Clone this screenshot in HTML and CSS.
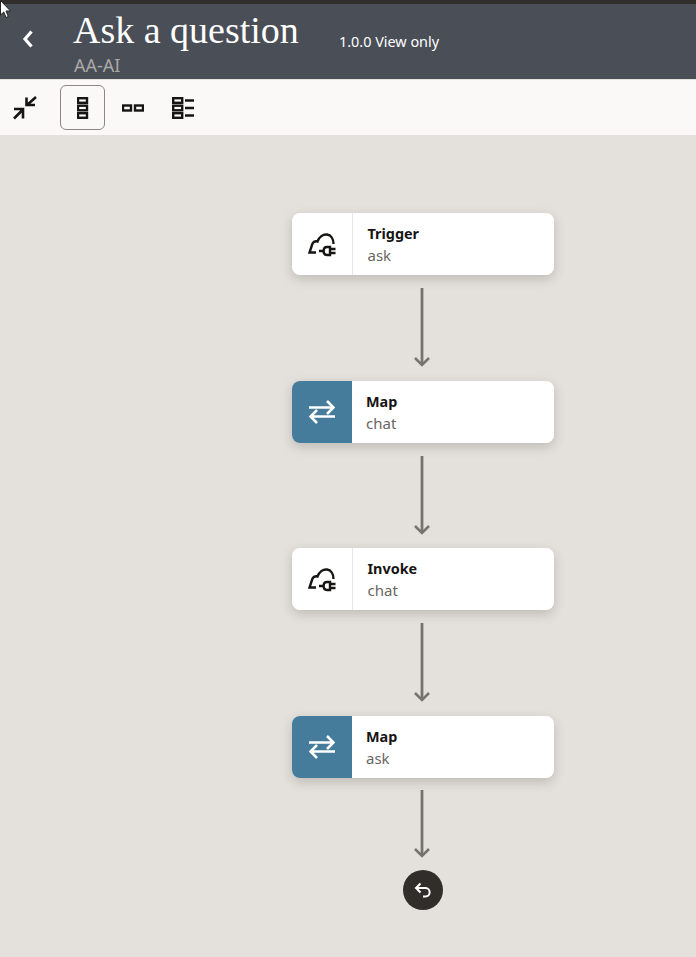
FILE: index.html
```html
<!DOCTYPE html>
<html>
<head>
    <title>Ask a question</title>
    <link rel="stylesheet" href="styles.css">
</head>
<body>
    <svg class="cursor" width="12" height="20" viewBox="0 0 12 20">
        <path d="M0.5 0.5 L0.5 15 L3.8 12 L6 17.5 L8.3 16.5 L6 11 L10.5 11 Z" fill="#fff" stroke="#222" stroke-width="1"/>
    </svg>

    <div class="topline"></div>

    <div class="header">
        <a class="back">
            <svg width="12" height="20" viewBox="0 0 12 20"><path d="M9.5 2.5 L3 10 L9.5 17.5" fill="none" stroke="#fff" stroke-width="3.2"/></svg>
        </a>
        <div class="titles">
            <h1>Ask a question</h1>
            <div class="subtitle">AA-AI</div>
        </div>
        <div class="version">1.0.0 View only</div>
    </div>

    <div class="toolbar">
        <button class="tool">
            <svg width="24" height="24" viewBox="0 0 24 24" fill="none" stroke="#161513" stroke-width="2.6">
                <path d="M23 1 L13.5 9.5 M13.5 1.5 V9 H22"/>
                <path d="M1 22.5 L10 13.5 M1 13 H10 V22.5"/>
            </svg>
        </button>
        <button class="tool active">
            <svg width="12" height="22" viewBox="0 0 12 22" fill="none" stroke="#161513" stroke-width="2.4">
                <rect x="1" y="1.2" width="9" height="4.6"/>
                <rect x="1" y="8.7" width="9" height="4.6"/>
                <rect x="1" y="16.2" width="9" height="4.6"/>
            </svg>
        </button>
        <button class="tool">
            <svg width="22" height="8" viewBox="0 0 22 8" fill="none" stroke="#161513" stroke-width="2.4">
                <rect x="1" y="1.5" width="8" height="5"/>
                <rect x="13" y="1.5" width="8" height="5"/>
            </svg>
        </button>
        <button class="tool">
            <svg width="22" height="22" viewBox="0 0 22 22" fill="none" stroke="#161513" stroke-width="2.4">
                <rect x="1.2" y="1.2" width="9" height="4.6"/>
                <rect x="1.2" y="8.7" width="9" height="4.6"/>
                <rect x="1.2" y="16.2" width="9" height="4.6"/>
                <path d="M13 3.5 H22 M13 11 H22 M13 18.5 H22"/>
            </svg>
        </button>
    </div>

    <div class="canvas">
        <div class="card">
            <div class="card-icon">
                <svg width="28" height="26" viewBox="0 0 28 26" fill="none" stroke="#161513" stroke-width="2.4">
                    <path d="M8 21.5 H1.5 L4.5 12.5 C5.5 10.5 7.5 10 9.5 10.5 C11 6 15 3 19 3.5 C23 4 25.5 8 25.5 13"/>
                    <path d="M11 20 H15 M22 16 H19 C14.5 16 14.5 24 19 24 H22 Z M22 18 H27.5 M22 22 H27.5"/>
                </svg>
            </div>
            <div class="card-text">
                <div class="card-title">Trigger</div>
                <div class="card-sub">ask</div>
            </div>
        </div>
        <div class="arrow">
            <svg width="16" height="79" viewBox="0 0 16 79" fill="none" stroke="#76726d" stroke-width="2.8">
                <path d="M8 0 V77"/>
                <path d="M1 70 L8 77 L15 70" stroke-width="2.5"/>
            </svg>
        </div>

        <div class="card">
            <div class="card-icon map">
                <svg width="26" height="24" viewBox="0 0 26 24" fill="none" stroke="#fff" stroke-width="2.6">
                    <path d="M0 7.5 H24.5 M18 1 L24.5 7.5 L18 14"/>
                    <path d="M26 16.5 H1.5 M8 10 L1.5 16.5 L8 23"/>
                </svg>
            </div>
            <div class="card-text">
                <div class="card-title">Map</div>
                <div class="card-sub">chat</div>
            </div>
        </div>
        <div class="arrow">
            <svg width="16" height="79" viewBox="0 0 16 79" fill="none" stroke="#76726d" stroke-width="2.8">
                <path d="M8 0 V77"/>
                <path d="M1 70 L8 77 L15 70" stroke-width="2.5"/>
            </svg>
        </div>

        <div class="card">
            <div class="card-icon">
                <svg width="28" height="26" viewBox="0 0 28 26" fill="none" stroke="#161513" stroke-width="2.4">
                    <path d="M8 21.5 H1.5 L4.5 12.5 C5.5 10.5 7.5 10 9.5 10.5 C11 6 15 3 19 3.5 C23 4 25.5 8 25.5 13"/>
                    <path d="M11 20 H15 M22 16 H19 C14.5 16 14.5 24 19 24 H22 Z M22 18 H27.5 M22 22 H27.5"/>
                </svg>
            </div>
            <div class="card-text">
                <div class="card-title">Invoke</div>
                <div class="card-sub">chat</div>
            </div>
        </div>
        <div class="arrow">
            <svg width="16" height="79" viewBox="0 0 16 79" fill="none" stroke="#76726d" stroke-width="2.8">
                <path d="M8 0 V77"/>
                <path d="M1 70 L8 77 L15 70" stroke-width="2.5"/>
            </svg>
        </div>

        <div class="card">
            <div class="card-icon map">
                <svg width="26" height="24" viewBox="0 0 26 24" fill="none" stroke="#fff" stroke-width="2.6">
                    <path d="M0 7.5 H24.5 M18 1 L24.5 7.5 L18 14"/>
                    <path d="M26 16.5 H1.5 M8 10 L1.5 16.5 L8 23"/>
                </svg>
            </div>
            <div class="card-text">
                <div class="card-title">Map</div>
                <div class="card-sub">ask</div>
            </div>
        </div>
        <div class="arrow last">
            <svg width="16" height="68" viewBox="0 0 16 68" fill="none" stroke="#76726d" stroke-width="2.8">
                <path d="M8 0 V66"/>
                <path d="M1 59 L8 66 L15 59" stroke-width="2.5"/>
            </svg>
        </div>

        <div class="end">
            <svg width="18" height="18" viewBox="0 0 18 18" fill="none" stroke="#fff" stroke-width="2">
                <path d="M6.5 2.5 L2 7 L6.5 11.5"/>
                <path d="M2 7 H11.5 C17 7 17 15.5 11.5 15.5 H9"/>
            </svg>
        </div>
    </div>
</body>
</html>
```

FILE: styles.css
```css
* {
    box-sizing: border-box;
}

html, body {
    height: 100%;
}

body {
    margin: 0;
    display: flex;
    flex-direction: column;
    font-family: "Noto Sans", Arial, sans-serif;
    background-color: #e4e1dc;
    overflow: hidden;
}

.cursor {
    position: absolute;
    left: 0;
    top: 0;
}

.topline {
    height: 4px;
    background-color: #312d2a;
}

.header {
    height: 75px;
    display: flex;
    background-color: #4a4e57;
    color: white;
}

.back {
    width: 73px;
    padding: 25px 0 0 22px;
}

.titles {
    width: 266px;
}

h1 {
    margin: 0;
    padding-top: 6px;
    font-family: "Liberation Serif", Georgia, serif;
    font-size: 38px;
    font-weight: normal;
    line-height: 40px;
}

.subtitle {
    margin: 6px 0 0 1px;
    font-size: 18px;
    line-height: 18px;
    color: #a9a9a9;
}

.version {
    padding-top: 28px;
    font-size: 14.4px;
    line-height: 20px;
}

.toolbar {
    height: 56px;
    padding: 5px 0 0 2px;
    display: flex;
    gap: 5px;
    border-top: 1px solid #e4e1dc;
    background-color: #fbf9f8;
}

.tool {
    width: 45px;
    height: 45px;
    padding: 0;
    display: flex;
    align-items: center;
    justify-content: center;
    background: none;
    border: 1px solid transparent;
    border-radius: 6px;
}

.tool.active {
    border-color: #8b8782;
}

.tool:first-child {
    margin-right: 8px;
}

.canvas {
    flex: 1;
    padding: 78px 0 0 292px;
    display: flex;
    flex-direction: column;
    align-items: flex-start;
}

.card {
    width: 262px;
    height: 62px;
    flex: none;
    display: flex;
    background-color: white;
    border-radius: 8px;
    overflow: hidden;
    box-shadow: 0 4px 12px rgba(0, 0, 0, 0.17);
}

.card-icon {
    width: 61px;
    display: flex;
    align-items: center;
    justify-content: center;
    border-right: 1px solid #e8e6e2;
}

.card-icon.map {
    width: 60px;
    border-right: none;
    background-color: #457b9b;
}

.card-text {
    padding: 10px 0 0 14.5px;
}

.card-icon.map + .card-text {
    padding-left: 14px;
}

.card-title {
    font-size: 14.4px;
    line-height: 21px;
    font-weight: bold;
    color: #161513;
}

.card-sub {
    font-size: 15px;
    line-height: 22px;
    color: #6a6662;
}

.arrow {
    height: 105.5px;
    flex: none;
    margin-left: 122px;
    padding-top: 13px;
}

.arrow svg {
    display: block;
}

.arrow.last {
    height: 92.5px;
    padding-top: 12px;
}

.end {
    width: 40px;
    height: 40px;
    flex: none;
    margin-left: 110.5px;
    display: flex;
    align-items: center;
    justify-content: center;
    border-radius: 50%;
    background-color: #312d2a;
}
```
